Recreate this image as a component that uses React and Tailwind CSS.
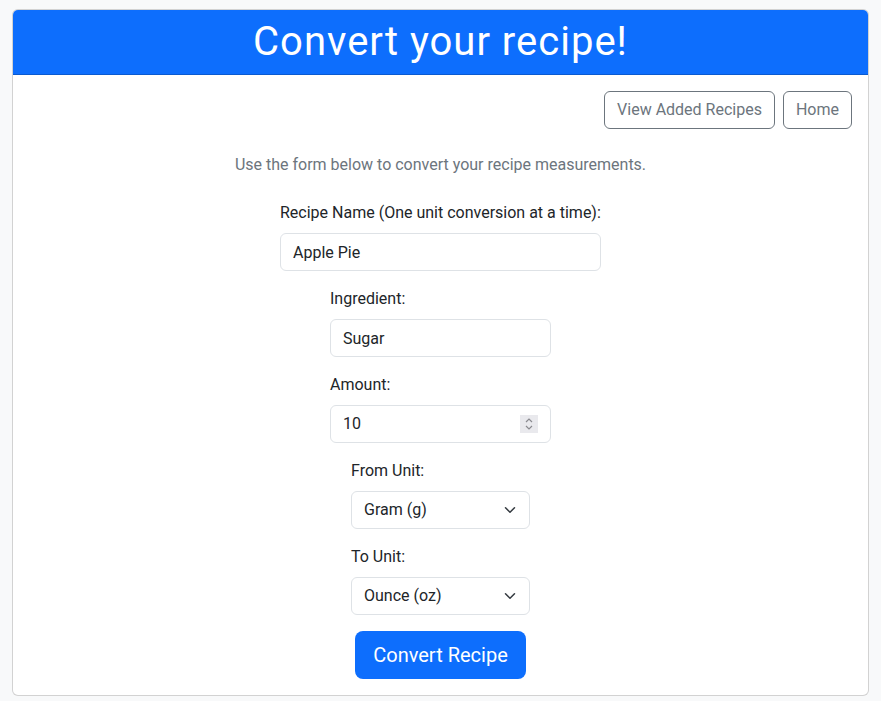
import React from 'react';

const font = { fontFamily: 'Roboto, "Noto Sans", "Liberation Sans", sans-serif' };

function Field({ label, width, children }) {
  return (
    <div className={`${width} mb-4`}>
      <label className="block mb-2 text-base leading-6 text-[#212529]">{label}</label>
      {children}
    </div>
  );
}

function TextInput({ value }) {
  return (
    <input
      type="text"
      defaultValue={value}
      className="block w-full h-[38px] px-3 py-1.5 text-base leading-6 text-[#212529] bg-white border border-[#dee2e6] rounded-md outline-none"
    />
  );
}

function NumberInput({ value }) {
  return (
    <div className="flex items-center w-full h-[38px] pl-3 pr-3 bg-white border border-[#dee2e6] rounded-md">
      <input
        type="text"
        defaultValue={value}
        className="flex-1 min-w-0 text-base leading-6 text-[#212529] outline-none bg-transparent"
      />
      <span className="flex items-center justify-center w-[18px] h-[18px] bg-[#e9e9ed]">
        <svg width="10" height="14" viewBox="0 0 10 14" fill="none" stroke="#8a8a8f" strokeWidth="1.2">
          <path d="M2 5 L5 2 L8 5" />
          <path d="M2 9 L5 12 L8 9" />
        </svg>
      </span>
    </div>
  );
}

function Select({ value }) {
  return (
    <div className="relative">
      <select
        defaultValue={value}
        className="block w-full h-[38px] pl-3 pr-9 py-1.5 text-base leading-6 text-[#212529] bg-white border border-[#dee2e6] rounded-md appearance-none outline-none"
        style={font}
      >
        <option>{value}</option>
      </select>
      <svg
        className="absolute right-3 top-[13px] pointer-events-none"
        width="16"
        height="12"
        viewBox="0 0 16 16"
        fill="none"
        stroke="#343a40"
        strokeWidth="2"
        strokeLinecap="round"
        strokeLinejoin="round"
      >
        <path d="m2 5 6 6 6-6" />
      </svg>
    </div>
  );
}

export default function App() {
  return (
    <div className="min-h-screen bg-[#f8f9fa] px-3 pt-[9px]" style={font}>
      <div className="bg-white border border-black/[0.175] rounded-md overflow-hidden">
        <div className="bg-[#0d6efd] border-b border-black/[0.175] px-4 py-2 text-center">
          <h1 className="text-[40px] leading-[48px] tracking-[1px] text-white font-normal">Convert your recipe!</h1>
        </div>
        <div className="p-4">
          <div className="flex justify-end gap-2 mb-6">
            <button className="h-[38px] px-3 text-base text-[#6c757d] border border-[#6c757d] rounded-md bg-transparent">
              View Added Recipes
            </button>
            <button className="h-[38px] px-3 text-base text-[#6c757d] border border-[#6c757d] rounded-md bg-transparent">
              Home
            </button>
          </div>
          <p className="text-center text-base leading-6 text-[#6c757d] mb-6">
            Use the form below to convert your recipe measurements.
          </p>
          <div className="flex flex-col items-center">
            <Field label="Recipe Name (One unit conversion at a time):" width="w-[321px]">
              <TextInput value="Apple Pie" />
            </Field>
            <Field label="Ingredient:" width="w-[221px]">
              <TextInput value="Sugar" />
            </Field>
            <Field label="Amount:" width="w-[221px]">
              <NumberInput value="10" />
            </Field>
            <Field label="From Unit:" width="w-[179px]">
              <Select value="Gram (g)" />
            </Field>
            <Field label="To Unit:" width="w-[179px]">
              <Select value="Ounce (oz)" />
            </Field>
            <button className="w-[171px] h-12 px-4 text-xl text-white bg-[#0d6efd] rounded-lg">
              Convert Recipe
            </button>
          </div>
        </div>
      </div>
    </div>
  );
}
